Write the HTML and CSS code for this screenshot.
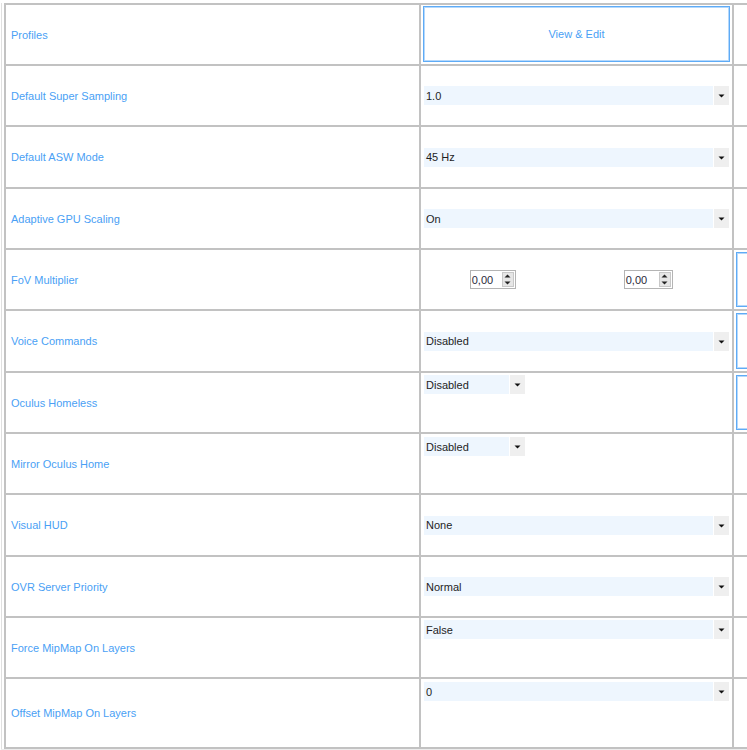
FILE: index.html
```html
<!DOCTYPE html>
<html>
<head>
<meta charset="utf-8">
<link rel="stylesheet" href="styles.css">
</head>
<body>
<div class="frame">
  <div class="table">
    <div class="row">
      <div class="cell label">Profiles</div>
      <div class="cell value pad-btn"><div class="button">View &amp; Edit</div></div>
      <div class="cell extra"></div>
    </div>
    <div class="row">
      <div class="cell label">Default Super Sampling</div>
      <div class="cell value"><div class="select"><span class="sel-text">1.0</span><span class="sel-arrow"><svg width="7" height="5" viewBox="0 0 7 5"><path d="M0.5 1.5h6L3.5 4.5z" fill="#111"/></svg></span></div></div>
      <div class="cell extra"></div>
    </div>
    <div class="row">
      <div class="cell label">Default ASW Mode</div>
      <div class="cell value"><div class="select"><span class="sel-text">45 Hz</span><span class="sel-arrow"><svg width="7" height="5" viewBox="0 0 7 5"><path d="M0.5 1.5h6L3.5 4.5z" fill="#111"/></svg></span></div></div>
      <div class="cell extra"></div>
    </div>
    <div class="row">
      <div class="cell label">Adaptive GPU Scaling</div>
      <div class="cell value"><div class="select"><span class="sel-text">On</span><span class="sel-arrow"><svg width="7" height="5" viewBox="0 0 7 5"><path d="M0.5 1.5h6L3.5 4.5z" fill="#111"/></svg></span></div></div>
      <div class="cell extra"></div>
    </div>
    <div class="row">
      <div class="cell label">FoV Multiplier</div>
      <div class="cell value spins">
        <div class="spin-slot">
          <div class="spin"><span class="spin-text">0,00</span><span class="spin-btns"><span class="spin-btn"><svg width="7" height="4" viewBox="0 0 7 4"><path d="M0.5 3.5h6L3.5 0.5z" fill="#222"/></svg></span><span class="spin-btn"><svg width="7" height="4" viewBox="0 0 7 4"><path d="M0.5 0.5h6L3.5 3.5z" fill="#222"/></svg></span></span></div>
        </div>
        <div class="spin-slot">
          <div class="spin wide"><span class="spin-text">0,00</span><span class="spin-btns"><span class="spin-btn"><svg width="7" height="4" viewBox="0 0 7 4"><path d="M0.5 3.5h6L3.5 0.5z" fill="#222"/></svg></span><span class="spin-btn"><svg width="7" height="4" viewBox="0 0 7 4"><path d="M0.5 0.5h6L3.5 3.5z" fill="#222"/></svg></span></span></div>
        </div>
      </div>
      <div class="cell extra"><div class="side-box"></div></div>
    </div>
    <div class="row">
      <div class="cell label">Voice Commands</div>
      <div class="cell value"><div class="select"><span class="sel-text">Disabled</span><span class="sel-arrow"><svg width="7" height="5" viewBox="0 0 7 5"><path d="M0.5 1.5h6L3.5 4.5z" fill="#111"/></svg></span></div></div>
      <div class="cell extra"><div class="side-box"></div></div>
    </div>
    <div class="row">
      <div class="cell label">Oculus Homeless</div>
      <div class="cell value top"><div class="select short"><span class="sel-text">Disabled</span><span class="sel-arrow"><svg width="7" height="5" viewBox="0 0 7 5"><path d="M0.5 1.5h6L3.5 4.5z" fill="#111"/></svg></span></div></div>
      <div class="cell extra"><div class="side-box"></div></div>
    </div>
    <div class="row">
      <div class="cell label">Mirror Oculus Home</div>
      <div class="cell value top top3"><div class="select short"><span class="sel-text">Disabled</span><span class="sel-arrow"><svg width="7" height="5" viewBox="0 0 7 5"><path d="M0.5 1.5h6L3.5 4.5z" fill="#111"/></svg></span></div></div>
      <div class="cell extra"></div>
    </div>
    <div class="row">
      <div class="cell label">Visual HUD</div>
      <div class="cell value"><div class="select"><span class="sel-text">None</span><span class="sel-arrow"><svg width="7" height="5" viewBox="0 0 7 5"><path d="M0.5 1.5h6L3.5 4.5z" fill="#111"/></svg></span></div></div>
      <div class="cell extra"></div>
    </div>
    <div class="row">
      <div class="cell label">OVR Server Priority</div>
      <div class="cell value"><div class="select"><span class="sel-text">Normal</span><span class="sel-arrow"><svg width="7" height="5" viewBox="0 0 7 5"><path d="M0.5 1.5h6L3.5 4.5z" fill="#111"/></svg></span></div></div>
      <div class="cell extra"></div>
    </div>
    <div class="row">
      <div class="cell label">Force MipMap On Layers</div>
      <div class="cell value top"><div class="select"><span class="sel-text">False</span><span class="sel-arrow"><svg width="7" height="5" viewBox="0 0 7 5"><path d="M0.5 1.5h6L3.5 4.5z" fill="#111"/></svg></span></div></div>
      <div class="cell extra"></div>
    </div>
    <div class="row last">
      <div class="cell label">Offset MipMap On Layers</div>
      <div class="cell value top top3"><div class="select"><span class="sel-text">0</span><span class="sel-arrow"><svg width="7" height="5" viewBox="0 0 7 5"><path d="M0.5 1.5h6L3.5 4.5z" fill="#111"/></svg></span></div></div>
      <div class="cell extra"></div>
    </div>
  </div>
  <div class="footer"></div>
</div>
</body>
</html>
```

FILE: styles.css
```css
html, body {
  margin: 0;
  padding: 0;
  background: #ffffff;
  overflow: hidden;
}

body {
  font-family: "Liberation Sans", Arial, sans-serif;
  font-size: 11px;
  width: 747px;
  height: 750px;
}

.frame {
  padding-top: 3px;
  padding-left: 1px;
}

.table {
  border-left: 1px solid #e0e0e0;
  padding-left: 2px;
  width: 760px;
}

.table > .row:first-child .cell {
  border-top: 2px solid #c2c2c2;
}

.row {
  display: grid;
  grid-template-columns: 417px 313px 1fr;
  height: 61px;
  box-sizing: border-box;
}

.row:nth-child(3n) {
  height: 62px;
}

.row:first-child {
  height: 63px;
}

.row.last {
  height: 70px;
}

.cell {
  box-sizing: border-box;
  border-right: 2px solid #c2c2c2;
  border-bottom: 2px solid #c2c2c2;
  display: flex;
  align-items: center;
  min-width: 0;
}

.cell.label {
  border-left: 2px solid #c2c2c2;
  padding-left: 5px;
  color: #4a9ff5;
}

.cell.value {
  padding: 0 3px;
}

.cell.value.pad-btn {
  padding: 1px 2px 2px 2px;
}

.cell.value.top {
  align-items: flex-start;
  padding-top: 2px;
}

.cell.value.top.top3 {
  padding-top: 3px;
}

.cell.extra {
  border-right: none;
  padding: 2px 0 2px 2px;
  align-items: stretch;
}

.button {
  flex: 1;
  height: 100%;
  box-sizing: border-box;
  border: 1px solid #5eabf6;
  box-shadow: inset 0 0 0 1px #b5d8fb;
  display: flex;
  align-items: center;
  justify-content: center;
  color: #4a9ff5;
}

.side-box {
  flex: 1;
  box-sizing: border-box;
  border: 1px solid #5eabf6;
  box-shadow: inset 0 0 0 1px #b5d8fb;
  border-right: none;
}

.select {
  display: flex;
  width: 100%;
  height: 19px;
  gap: 1px;
}

.select.short {
  width: 101px;
}

.sel-text {
  flex: 1;
  background: #eef6fe;
  color: #1e1e1e;
  padding-left: 2px;
  display: flex;
  align-items: center;
}

.sel-arrow {
  width: 15px;
  background: #efefef;
  display: flex;
  align-items: center;
  justify-content: center;
}

.spins {
  display: flex;
}

.cell.value.spins {
  padding: 0;
}

.spin-slot {
  flex: 1;
  display: flex;
  justify-content: center;
  padding-right: 12px;
}

.spin {
  display: flex;
  align-items: center;
  width: 46px;
  height: 19px;
  box-sizing: border-box;
  border: 1px solid #b4b4b4;
  background: #fff;
}

.spin.wide {
  width: 49px;
}

.spin-text {
  flex: 1;
  color: #2a2a3a;
  padding-left: 1px;
}

.spin-btns {
  display: flex;
  flex-direction: column;
  width: 12px;
  height: 15px;
  margin-right: 1px;
  box-sizing: border-box;
  border: 1px solid #c8c8c8;
  background: #e6e6e6;
}

.spin-btn {
  flex: 1;
  display: flex;
  align-items: center;
  justify-content: center;
}

.footer {
  height: 10px;
  background: #ececec;
}
```
